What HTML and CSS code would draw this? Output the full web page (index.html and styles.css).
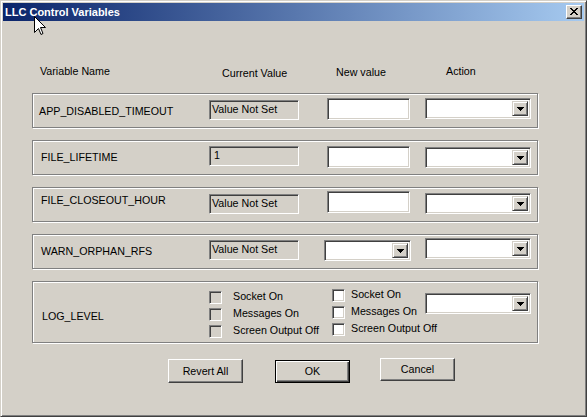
FILE: index.html
```html
<!DOCTYPE html>
<html>
<head>
<meta charset="utf-8">
<title>LLC Control Variables</title>
<link rel="stylesheet" href="styles.css">
</head>
<body>
<div class="window">
  <div class="titlebar">
    <span class="title">LLC Control Variables</span>
    <span class="close-btn">
      <svg width="8" height="7" viewBox="0 0 8 7" shape-rendering="crispEdges"><path d="M0 0h2v1h1v1h2v-1h1v-1h2v1h-1v1h-1v1h-1v1h1v1h1v1h1v1h-2v-1h-1v-1h-2v1h-1v1h-2v-1h1v-1h1v-1h1v-1h-1v-1h-1v-1h-1z" fill="#000"/></svg>
    </span>
  </div>
  <div class="client">
    <div class="heads">
      <span class="h h-name">Variable Name</span>
      <span class="h h-cur mt2">Current Value</span>
      <span class="h h-new mt1">New value</span>
      <span class="h h-act">Action</span>
    </div>

    <div class="group">
      <span class="name pad6 mt11">APP_DISABLED_TIMEOUT</span>
      <span class="cur sunken mt6">Value Not Set</span>
      <span class="edit sunken mt4"></span>
      <span class="combo sunken act mt4"><span class="drop"><svg width="7" height="4" viewBox="0 0 7 4" shape-rendering="crispEdges"><path d="M0 0h7v1h-1v1h-1v1h-1v1h-1v-1h-1v-1h-1v-1h-1z" fill="#000"/></svg></span></span>
    </div>

    <div class="group">
      <span class="name pad8 mt10">FILE_LIFETIME</span>
      <span class="cur cur-num sunken mt5">1</span>
      <span class="edit sunken mt5"></span>
      <span class="combo sunken act mt6"><span class="drop"><svg width="7" height="4" viewBox="0 0 7 4" shape-rendering="crispEdges"><path d="M0 0h7v1h-1v1h-1v1h-1v1h-1v-1h-1v-1h-1v-1h-1z" fill="#000"/></svg></span></span>
    </div>

    <div class="group">
      <span class="name pad8 mt6">FILE_CLOSEOUT_HOUR</span>
      <span class="cur sunken mt6">Value Not Set</span>
      <span class="edit sunken mt3"></span>
      <span class="combo sunken act mt5"><span class="drop"><svg width="7" height="4" viewBox="0 0 7 4" shape-rendering="crispEdges"><path d="M0 0h7v1h-1v1h-1v1h-1v1h-1v-1h-1v-1h-1v-1h-1z" fill="#000"/></svg></span></span>
    </div>

    <div class="group">
      <span class="name pad8 mt10">WARN_ORPHAN_RFS</span>
      <span class="cur sunken mt5">Value Not Set</span>
      <span class="combo sunken newcombo mt5"><span class="drop"><svg width="7" height="4" viewBox="0 0 7 4" shape-rendering="crispEdges"><path d="M0 0h7v1h-1v1h-1v1h-1v1h-1v-1h-1v-1h-1v-1h-1z" fill="#000"/></svg></span></span>
      <span class="combo sunken act act-after-combo mt3"><span class="drop"><svg width="7" height="4" viewBox="0 0 7 4" shape-rendering="crispEdges"><path d="M0 0h7v1h-1v1h-1v1h-1v1h-1v-1h-1v-1h-1v-1h-1z" fill="#000"/></svg></span></span>
    </div>

    <div class="group group-tall">
      <span class="name pad9 mt28">LOG_LEVEL</span>
      <div class="checks checks-cur mt9">
        <div class="check"><span class="chk sunken dis"></span><span class="lbl">Socket On</span></div>
        <div class="check"><span class="chk sunken dis"></span><span class="lbl">Messages On</span></div>
        <div class="check"><span class="chk sunken dis"></span><span class="lbl">Screen Output Off</span></div>
      </div>
      <div class="checks checks-new mt7">
        <div class="check"><span class="chk sunken"></span><span class="lbl">Socket On</span></div>
        <div class="check"><span class="chk sunken"></span><span class="lbl">Messages On</span></div>
        <div class="check"><span class="chk sunken"></span><span class="lbl">Screen Output Off</span></div>
      </div>
      <span class="combo sunken act-log mt11"><span class="drop"><svg width="7" height="4" viewBox="0 0 7 4" shape-rendering="crispEdges"><path d="M0 0h7v1h-1v1h-1v1h-1v1h-1v-1h-1v-1h-1v-1h-1z" fill="#000"/></svg></span></span>
    </div>

    <div class="buttons">
      <span class="btn btn-revert">Revert All</span>
      <span class="btn btn-ok">OK</span>
      <span class="btn btn-cancel">Cancel</span>
    </div>
  </div>

  <svg class="cursor" width="13" height="20" viewBox="0 0 13 20">
    <path d="M0.5 0.5V16.5L4.5 12.5L7 18.5L9 17.5L6.5 11.5H11.5Z" fill="#fff" stroke="#000" stroke-width="1" stroke-linejoin="miter"/>
  </svg>
</div>
</body>
</html>
```
FILE: styles.css
```css
* { box-sizing: border-box; }

html, body {
  margin: 0;
  padding: 0;
  background: #d4d0c8;
}

body {
  font-family: "Liberation Sans", Arial, sans-serif;
  font-size: 10.7px;
  line-height: 13px;
  color: #000;
}

.window {
  position: relative;
  width: 587px;
  height: 417px;
  background: #d4d0c8;
  border: 1px solid;
  border-color: #d4d0c8 #404040 #404040 #d4d0c8;
  box-shadow: inset 1px 1px 0 #fff, inset -1px -1px 0 #808080;
  padding: 2px;
  display: flex;
  flex-direction: column;
  overflow: hidden;
}

.titlebar {
  height: 18px;
  flex: none;
  background: linear-gradient(to right, #0a246a, #a6caf0);
  display: flex;
  align-items: center;
  justify-content: space-between;
  padding: 0 2px 0 2px;
}

.title {
  color: #fff;
  font-weight: bold;
  font-size: 11px;
  line-height: 13px;
}

.close-btn {
  width: 16px;
  height: 14px;
  background: #d4d0c8;
  border: 1px solid;
  border-color: #fff #404040 #404040 #fff;
  box-shadow: inset -1px -1px 0 #808080, inset 1px 1px 0 #d4d0c8;
  display: flex;
  align-items: center;
  justify-content: center;
  padding: 0 1px 1px 0;
}

.close-btn svg { display: block; }

.client {
  flex: 1;
  padding-top: 44px;
  display: flex;
  flex-direction: column;
}

.heads {
  display: flex;
  align-items: flex-start;
  height: 28px;
  flex: none;
}

.h { display: block; white-space: nowrap; }
.h-name { margin-left: 37px; width: 182px; }
.h-cur { width: 114px; }
.h-new { width: 110px; }

.group {
  margin-left: 29px;
  width: 506px;
  height: 35px;
  flex: none;
  border: 1px solid #808080;
  box-shadow: inset 1px 1px 0 #fff, 1px 1px 0 #fff;
  display: flex;
  align-items: flex-start;
}

.group + .group { margin-top: 12px; }
.group-tall { height: 62px; }

.name {
  display: block;
  width: 176px;
  white-space: nowrap;
}

.pad6 { padding-left: 6px; }
.pad8 { padding-left: 8px; }
.pad9 { padding-left: 9px; }

.mt1 { margin-top: 1px; }
.mt2 { margin-top: 2px; }
.mt3 { margin-top: 3px; }
.mt4 { margin-top: 4px; }
.mt5 { margin-top: 5px; }
.mt6 { margin-top: 6px; }
.mt7 { margin-top: 7px; }
.mt9 { margin-top: 9px; }
.mt10 { margin-top: 10px; }
.mt11 { margin-top: 11px; }
.mt28 { margin-top: 28px; }

.sunken {
  border: 1px solid;
  border-color: #808080 #fff #fff #808080;
  box-shadow: inset 1px 1px 0 #404040, inset -1px -1px 0 #d4d0c8;
}

.cur {
  display: block;
  width: 90px;
  height: 20px;
  background: #d4d0c8;
  padding: 1px 0 0 2px;
  line-height: 15px;
  white-space: nowrap;
}

.cur-num { padding-left: 4px; }

.edit {
  display: block;
  width: 83px;
  height: 22px;
  margin-left: 28px;
  background: #fff;
}

.combo {
  display: flex;
  justify-content: flex-end;
  height: 21px;
  background: #fff;
  padding: 2px;
}

.act { width: 106px; margin-left: 15px; }
.newcombo { width: 87px; margin-left: 25px; }
.act-after-combo { margin-left: 14px; }
.act-log { width: 106px; }

.drop {
  width: 16px;
  height: 100%;
  background: #d4d0c8;
  border: 1px solid;
  border-color: #d4d0c8 #404040 #404040 #d4d0c8;
  box-shadow: inset 1px 1px 0 #fff, inset -1px -1px 0 #808080;
  display: flex;
  align-items: center;
  justify-content: center;
  padding-top: 1px;
}

.drop svg { display: block; }

.checks { display: flex; flex-direction: column; }
.checks-cur { width: 123px; }
.checks-new { width: 93px; }

.check {
  display: flex;
  align-items: flex-start;
  height: 17px;
  white-space: nowrap;
}

.chk {
  display: block;
  width: 13px;
  height: 13px;
  flex: none;
  background: #fff;
}

.chk.dis { background: #d4d0c8; }

.lbl { display: block; margin-top: -1px; }
.checks-cur .lbl { margin-left: 11px; }
.checks-new .lbl { margin-left: 6px; }

.buttons {
  display: flex;
  align-items: flex-start;
  margin-top: 16px;
  flex: none;
}

.btn {
  display: flex;
  align-items: center;
  justify-content: center;
  width: 75px;
  height: 23px;
  background: #d4d0c8;
  border: 1px solid;
  border-color: #fff #404040 #404040 #fff;
  box-shadow: inset -1px -1px 0 #808080, inset 1px 1px 0 #d4d0c8;
}

.btn-revert { margin-left: 165px; height: 24px; }

.btn-ok {
  margin-left: 32px;
  margin-top: 1px;
  border: 1px solid #000;
  box-shadow: inset 1px 1px 0 #fff, inset -1px -1px 0 #404040, inset -2px -2px 0 #808080;
}

.btn-cancel { margin-left: 30px; margin-top: -1px; }

.cursor {
  position: absolute;
  left: 33px;
  top: 15px;
}
```
